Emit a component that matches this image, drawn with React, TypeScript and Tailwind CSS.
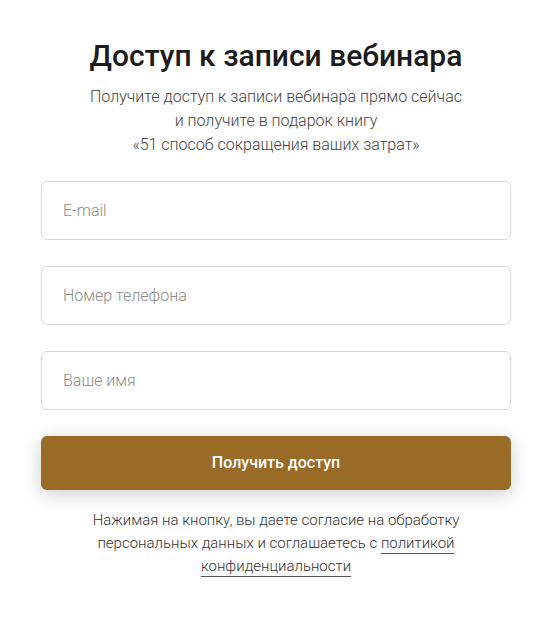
export default function App() {
    return (
        <div className="min-h-screen w-full bg-white flex justify-center" style={{ fontFamily: "Roboto, 'Noto Sans', sans-serif" }}>
            <div className="w-[470px] flex flex-col items-center pt-[38px]">
                <h1 className="text-[30px] leading-[36px] font-medium text-[#1b1b1b] text-center">
                    Доступ к записи вебинара
                </h1>
                <p className="mt-[11px] text-[16px] leading-[24px] font-light text-[#444] text-center">
                    Получите доступ к записи вебинара прямо сейчас
                    <br />
                    и получите в подарок книгу
                    <br />
                    «51 способ сокращения ваших затрат»
                </p>

                <form className="w-full mt-[24px] flex flex-col gap-[26px]">
                    <input
                        type="email"
                        placeholder="E-mail"
                        className="w-full h-[59px] rounded-[6px] border border-[#d9d9d9] px-[21px] text-[16px] font-light text-[#333] placeholder:text-[#8a8a8a] outline-none"
                    />
                    <input
                        type="tel"
                        placeholder="Номер телефона"
                        className="w-full h-[59px] rounded-[6px] border border-[#d9d9d9] px-[21px] text-[16px] font-light text-[#333] placeholder:text-[#8a8a8a] outline-none"
                    />
                    <input
                        type="text"
                        placeholder="Ваше имя"
                        className="w-full h-[59px] rounded-[6px] border border-[#d9d9d9] px-[21px] text-[16px] font-light text-[#333] placeholder:text-[#8a8a8a] outline-none"
                    />
                    <button
                        type="button"
                        className="w-full h-[54px] rounded-[6px] bg-[#9a6a27] text-white text-[16px] font-medium shadow-[0_4px_20px_rgba(0,0,0,0.2)]"
                    >
                        Получить доступ
                    </button>
                </form>

                <p className="mt-[19px] text-[15px] leading-[23px] font-light text-[#333] text-center">
                    Нажимая на кнопку, вы даете согласие на обработку
                    <br />
                    персональных данных и соглашаетесь с{" "}
                    <a href="#" className="underline underline-offset-[5px] decoration-[#555]">
                        политикой
                        <br />
                        конфиденциальности
                    </a>
                </p>
            </div>
        </div>
    );
}
